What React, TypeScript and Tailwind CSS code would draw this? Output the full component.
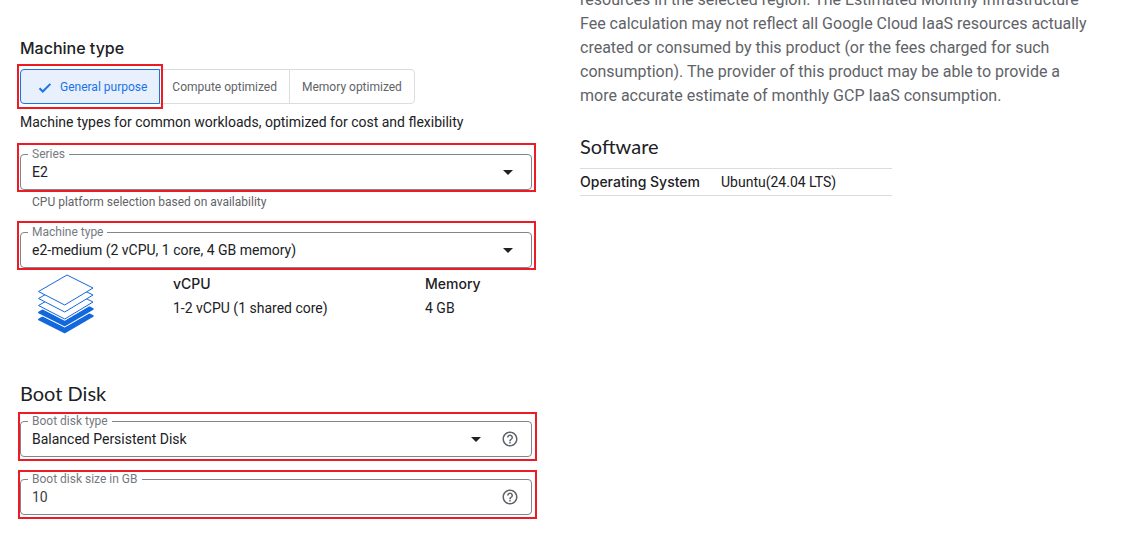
import React, { useState } from 'react';
import { MdArrowDropDown, MdHelpOutline } from 'react-icons/md';

const PURPOSES = ['General purpose', 'Compute optimized', 'Memory optimized'];

// Red annotation frame drawn on top of whatever it wraps
const Highlight: React.FC<{ className: string }> = ({ className }) => (
  <span className={`pointer-events-none absolute border-2 border-[#ed1c24] ${className}`} />
);

interface FieldProps {
  id: string;
  label: string;
  help?: boolean;
  children: React.ReactNode;
}

const Field: React.FC<FieldProps> = ({ id, label, help, children }) => (
  <div className="relative flex h-9 items-center rounded border border-[#80868b] pr-[11px]">
    <label htmlFor={id} className="absolute -top-[9px] left-[7px] bg-white px-1 text-xs leading-4 text-[#757a7f]">
      {label}
    </label>
    {children}
    {help && (
      <button type="button" aria-label={`Help for ${label}`} className="ml-[13px] pr-px text-[#5f6368]">
        <MdHelpOutline size={18} />
      </button>
    )}
    <Highlight
      className={help ? '-top-2.5 -right-1.5 -bottom-[5px] -left-[3px]' : '-top-3 -right-[5px] -bottom-[3px] -left-1'}
    />
  </div>
);

const SelectBox: React.FC<{ id: string; options: string[] }> = ({ id, options }) => (
  <div className="relative flex min-w-0 flex-1 items-center">
    <select id={id} className="w-full appearance-none bg-transparent pl-[11px] text-sm leading-5 outline-none">
      {options.map((option) => (
        <option key={option}>{option}</option>
      ))}
    </select>
    <MdArrowDropDown size={24} className="pointer-events-none absolute right-0" />
  </div>
);

const CheckIcon: React.FC = () => (
  <svg width="18" height="18" viewBox="0 0 18 18" aria-hidden="true" fill="none">
    <path d="M3.5 10.2 L6.8 13.5 L14.4 5.9" stroke="currentColor" strokeWidth="2" />
  </svg>
);

const LayersIcon: React.FC = () => (
  <svg width="60" height="64" viewBox="0 0 60 64" aria-hidden="true" strokeLinejoin="round">
    <path d="M31 31 L57 44 L28.7 60.5 L2.8 47.5 Z" fill="#1268dc" stroke="#1268dc" strokeWidth="1.5" />
    <path d="M31 24 L57.5 38.5 L28.7 55 L2.5 42 Z" fill="#fff" stroke="#fff" />
    <path d="M31 24 L57 37 L28.7 53.5 L2.8 40.5 Z" fill="#1268dc" stroke="#1268dc" strokeWidth="1.5" />
    <path d="M31 18 L57.5 31.3 L28.7 48.3 L2.5 34.8 Z" fill="#fff" stroke="#fff" />
    <path d="M31 17 L57 30 L28.7 47 L2.5 33.5 Z" fill="#fff" stroke="#1268dc" />
    <path d="M31 10 L57 23 L28.7 40 L2.5 26.5 Z" fill="#fff" stroke="#1268dc" />
    <path d="M31 3 L57 16 L28.7 33 L2.5 19.5 Z" fill="#fff" stroke="#1268dc" />
  </svg>
);

const App: React.FC = () => {
  const [purpose, setPurpose] = useState(PURPOSES[0]);
  const [diskSize, setDiskSize] = useState('10');

  return (
    <main className="grid grid-cols-2 gap-12 overflow-hidden bg-white pr-10 pb-6 pl-5 font-['Roboto',sans-serif] text-sm leading-5 text-[#202124]">
      {/* Machine configuration */}
      <div className="pt-9">
        <h3 className="font-['Inter',sans-serif] text-base leading-6 font-medium">Machine type</h3>
        <div className="mt-[9px] flex">
          {PURPOSES.map((name) => {
            const active = name === purpose;
            return (
              <button
                key={name}
                type="button"
                aria-pressed={active}
                onClick={() => setPurpose(name)}
                className={`relative -ml-px flex h-[35px] items-center border text-xs first:ml-0 first:rounded-l last:rounded-r ${
                  active
                    ? 'z-10 gap-1.5 border-[#1a73e8] bg-[#e8f0fe] pr-3 pl-[15px] text-[#1a73e8]'
                    : 'border-[#dadce0] px-3 text-[#5f6368]'
                }`}
              >
                {active && <CheckIcon />}
                {name}
                {active && <Highlight className="-inset-x-1 -inset-y-1.5" />}
              </button>
            );
          })}
        </div>
        <p className="mt-2">Machine types for common workloads, optimized for cost and flexibility</p>

        <div className="mt-[22px]">
          <Field id="series" label="Series">
            <SelectBox id="series" options={['E2', 'N1', 'N2']} />
          </Field>
          <p className="mt-1 pl-3 text-xs leading-4 text-[#5f6368]">CPU platform selection based on availability</p>
        </div>

        <div className="mt-[22px]">
          <Field id="machine-type" label="Machine type">
            <SelectBox
              id="machine-type"
              options={['e2-medium (2 vCPU, 1 core, 4 GB memory)', 'e2-small (2 vCPU, 1 core, 2 GB memory)']}
            />
          </Field>
        </div>

        <div className="mt-1 flex pl-4 leading-6">
          <LayersIcon />
          <dl className="flex flex-1 pl-[77px]">
            <div className="flex-[252]">
              <dt className="font-['Inter',sans-serif] font-medium">vCPU</dt>
              <dd>1-2 vCPU (1 shared core)</dd>
            </div>
            <div className="flex-[107]">
              <dt className="font-['Inter',sans-serif] font-medium">Memory</dt>
              <dd>4 GB</dd>
            </div>
          </dl>
        </div>

        <h2 className="mt-[43px] font-['Lato',sans-serif] text-xl leading-7">Boot Disk</h2>
        <div className="mt-3.5 flex flex-col gap-[22px]">
          <Field id="disk-type" label="Boot disk type" help>
            <SelectBox id="disk-type" options={['Balanced Persistent Disk', 'SSD Persistent Disk']} />
          </Field>
          <Field id="disk-size" label="Boot disk size in GB" help>
            <input
              id="disk-size"
              type="text"
              value={diskSize}
              onChange={(e) => setDiskSize(e.target.value)}
              className="min-w-0 flex-1 bg-transparent pl-[11px] text-sm leading-5 text-[#3c4043] outline-none"
            />
          </Field>
        </div>
      </div>

      {/* Pricing note and software details */}
      <div>
        <p className="-mt-3 text-base leading-6 text-[#5f6368]">
          resources in the selected region. The Estimated Monthly Infrastructure Fee calculation may not reflect all
          Google Cloud IaaS resources actually created or consumed by this product (or the fees charged for such
          consumption). The provider of this product may be able to provide a more accurate estimate of monthly GCP IaaS
          consumption.
        </p>
        <h2 className="mt-6 font-['Lato',sans-serif] text-xl leading-7">Software</h2>
        <table className="mt-2 text-left">
          <tbody>
            <tr className="border-y border-[#dadce0]">
              <th scope="row" className="w-[141px] py-[3px] font-['Inter',sans-serif] font-medium">
                Operating System
              </th>
              <td className="w-[171px] py-[3px]">Ubuntu(24.04 LTS)</td>
            </tr>
          </tbody>
        </table>
      </div>
    </main>
  );
};

export default App;
